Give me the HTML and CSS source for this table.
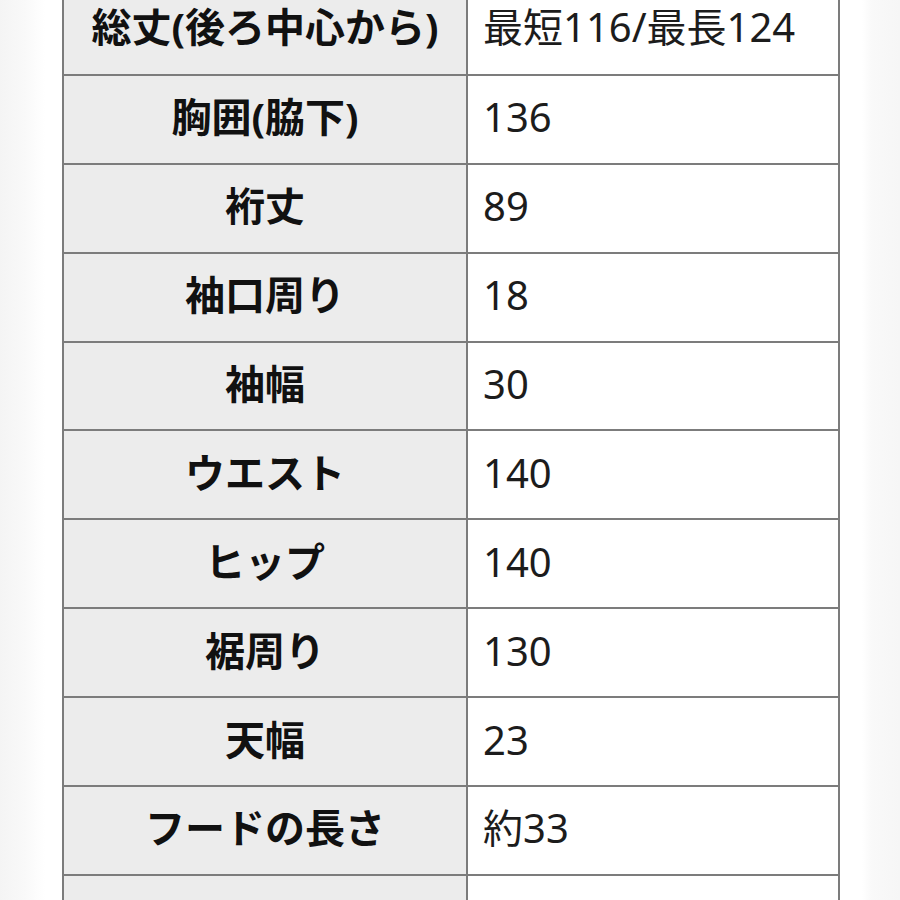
FILE: index.html
```html
<!DOCTYPE html>
<html lang="ja">
<head>
<meta charset="utf-8">
<title>サイズ表</title>
<link rel="stylesheet" href="styles.css">
</head>
<body>
<div class="page">
  <table class="size-table">
    <tbody>
      <tr><th>総丈(後ろ中心から)</th><td>最短116/最長124</td></tr>
      <tr><th>胸囲(脇下)</th><td>136</td></tr>
      <tr><th>裄丈</th><td>89</td></tr>
      <tr><th>袖口周り</th><td>18</td></tr>
      <tr><th>袖幅</th><td>30</td></tr>
      <tr><th>ウエスト</th><td>140</td></tr>
      <tr><th>ヒップ</th><td>140</td></tr>
      <tr><th>裾周り</th><td>130</td></tr>
      <tr><th>天幅</th><td>23</td></tr>
      <tr><th>フードの長さ</th><td>約33</td></tr>
      <tr><th></th><td></td></tr>
    </tbody>
  </table>
</div>
</body>
</html>
```
FILE: styles.css
```css
html, body {
  margin: 0;
  padding: 0;
  height: 100%;
  overflow: hidden;
}

body {
  background: linear-gradient(to right,
    #f4f4f4 0px, #f9f9f9 25px, #ffffff 45px,
    #ffffff 862px, #f9f9f9 872px, #f6f6f6 900px);
  font-family: "Noto Sans", "Noto Sans CJK JP", sans-serif;
  color: #111;
}

.page {
  padding-left: 62px;
  margin-top: -15px;
}

.size-table {
  border-collapse: separate;
  border-spacing: 0;
  border-left: 2px solid #7c7c7c;
  width: 778px;
  table-layout: fixed;
}

.size-table th,
.size-table td {
  box-sizing: border-box;
  height: 88.9px;
  border-right: 2px solid #7c7c7c;
  border-bottom: 2px solid #7c7c7c;
  font-size: 40px;
  line-height: 1;
  vertical-align: middle;
  padding: 0 0 4px 0;
}

.size-table tr:first-child th,
.size-table tr:first-child td {
  height: 90.9px;
}

.size-table th {
  width: 404px;
  background: #ececec;
  font-weight: 700;
  text-align: center;
  color: #111;
}

.size-table td {
  width: 372px;
  background: #ffffff;
  font-weight: 400;
  text-align: left;
  padding-left: 15px;
  color: #1c1c1c;
}
```
